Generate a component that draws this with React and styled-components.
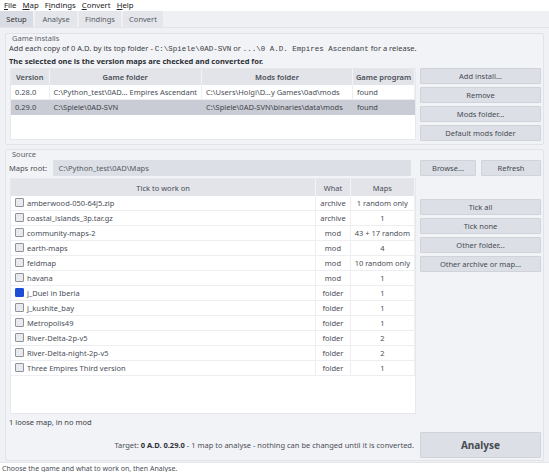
import React from "react";
import styled, { createGlobalStyle } from "styled-components";

const GlobalStyle = createGlobalStyle`
  html, body { margin: 0; padding: 0; }
  body {
    width: 549px;
    height: 472px;
    overflow: hidden;
    background: #f0f1f4;
    font-family: "Noto Sans", "Open Sans", sans-serif;
    font-size: 7.5px;
    color: #3a3d44;
  }
`;

/** Window frame */
const Window = styled.div`
  display: flex;
  flex-direction: column;
  width: 549px;
  height: 472px;
`;

const MenuBar = styled.div`
  display: flex;
  height: 11px;
  background: #ffffff;
  padding-left: 1px;
`;
const MenuItem = styled.div`
  padding: 0 3px;
  font-size: 7.8px;
  line-height: 11px;
  color: #222;
  span { text-decoration: underline; }
`;

const TabBar = styled.div`
  display: flex;
  gap: 2px;
  height: 16px;
  background: #eef0f3;
  border-bottom: 1px solid #e2e4e9;
`;
const Tab = styled.div`
  width: ${({ w }) => w}px;
  text-align: center;
  line-height: 16px;
  background: ${({ active }) => (active ? "#d9dce3" : "#e4e6eb")};
  color: ${({ active }) => (active ? "#333" : "#555a63")};
`;

const Content = styled.div`
  flex: 1;
  display: flex;
  flex-direction: column;
  gap: 4px;
  padding: 5px 5px 0;
`;

const Group = styled.div`
  display: flex;
  flex-direction: column;
  height: ${({ h }) => h}px;
  box-sizing: border-box;
  border: 1px solid #e1e3e8;
  border-radius: 2px;
  background: #f2f3f6;
  padding: 0 2px 0 4px;
`;
const GroupTitle = styled.div`
  line-height: 9px;
  margin-left: 2px;
  color: #5d626b;
`;
const Line = styled.div`
  line-height: ${({ lh }) => lh || 11}px;
  margin-left: -1px;
  font-weight: ${({ bold }) => (bold ? 700 : 400)};
  color: ${({ bold }) => (bold ? "#2c2f35" : "#3a3d44")};
  white-space: nowrap;
`;
const Mono = styled.span`
  font-family: "Liberation Mono", monospace;
  font-size: 7.5px;
`;

const Row = styled.div`
  display: flex;
  gap: ${({ gap }) => (gap === undefined ? 4 : gap)}px;
  margin-top: ${({ mt }) => mt || 0}px;
  margin-left: ${({ ml }) => ml || 0}px;
`;

/** Tables */
const TableBox = styled.div`
  width: 406px;
  height: ${({ h }) => h}px;
  background: #ffffff;
  border: 1px solid #e6e8ec;
  box-sizing: border-box;
  overflow: hidden;
`;
const Table = styled.table`
  border-collapse: collapse;
  table-layout: fixed;
  font-size: 7.5px;
  th {
    background: #e2e4e9;
    font-weight: ${({ boldHead }) => (boldHead ? 600 : 400)};
    color: #4a4e57;
    height: ${({ headH }) => headH}px;
    padding: 0;
    border-right: 1px solid #f3f4f6;
    text-align: center;
  }
  td {
    height: ${({ rowH }) => rowH}px;
    padding: 0 4px;
    border-bottom: 1px solid #eceef1;
    border-right: 1px solid #eceef1;
    white-space: nowrap;
    overflow: hidden;
    color: #4a4e57;
  }
  tr.sel td { background: #c9ccd4; color: #40434a; border-color: #c9ccd4; }
`;
const Cell = styled.td`
  text-align: ${({ align }) => align || "left"};
`;

const Check = styled.span`
  display: inline-block;
  width: 7px;
  height: 7px;
  margin-right: 3px;
  vertical-align: -1px;
  border: 1px solid ${({ on }) => (on ? "#1c4fd6" : "#8d929b")};
  background: ${({ on }) => (on ? "#1c4fd6" : "#e8eaee")};
  border-radius: 1px;
`;

/** Buttons */
const ButtonCol = styled.div`
  display: flex;
  flex-direction: column;
  gap: ${({ gap }) => gap}px;
  width: 121px;
  padding-top: ${({ pt }) => pt || 0}px;
`;
const Button = styled.div`
  height: ${({ h }) => h || 16}px;
  width: ${({ w }) => (w ? `${w}px` : "auto")};
  box-sizing: border-box;
  background: #dcdfe5;
  border: 1px solid #d0d3da;
  border-radius: 1px;
  text-align: center;
  line-height: ${({ h }) => (h || 16) - 2}px;
  color: #474b53;
  font-size: ${({ big }) => (big ? 10 : 7.5)}px;
  font-weight: ${({ big }) => (big ? 700 : 400)};
`;

const Label = styled.div`
  line-height: 16px;
  margin-left: -1px;
  color: #4a4e57;
  width: 41px;
`;
const PathInput = styled.div`
  width: 362px;
  height: 16px;
  box-sizing: border-box;
  background: #dcdfe5;
  line-height: 16px;
  padding-left: 5px;
  color: #555a63;
`;

const TargetRow = styled.div`
  display: flex;
  justify-content: flex-end;
  align-items: center;
  gap: 6px;
  margin-top: 4px;
`;
const TargetText = styled.div`
  color: #4a4e57;
  b { color: #2c2f35; }
`;

const StatusBar = styled.div`
  height: 10px;
  background: #ffffff;
  border-top: 1px solid #e4e6ea;
  margin-top: 1px;
  padding-left: 2px;
  font-size: 7px;
  line-height: 11px;
  color: #4a4e57;
  overflow: hidden;
`;

const installs = [
  { v: "0.28.0", g: "C:\\Python_test\\0AD... Empires Ascendant", m: "C:\\Users\\Holgi\\D...y Games\\0ad\\mods", p: "found" },
  { v: "0.29.0", g: "C:\\Spiele\\0AD-SVN", m: "C:\\Spiele\\0AD-SVN\\binaries\\data\\mods", p: "found", sel: true },
];

const maps = [
  ["amberwood-050-64j5.zip", "archive", "1 random only"],
  ["coastal_islands_3p.tar.gz", "archive", "1"],
  ["community-maps-2", "mod", "43 + 17 random"],
  ["earth-maps", "mod", "4"],
  ["feldmap", "mod", "10 random only"],
  ["havana", "mod", "1"],
  ["j_Duel in Iberia", "folder", "1", true],
  ["j_kushite_bay", "folder", "1"],
  ["Metropolis49", "folder", "1"],
  ["River-Delta-2p-v5", "folder", "2"],
  ["River-Delta-night-2p-v5", "folder", "2"],
  ["Three Empires Third version", "folder", "1"],
];

export default function App() {
  return (
    <>
      <GlobalStyle />
      <Window>
        <MenuBar>
          <MenuItem><span>F</span>ile</MenuItem>
          <MenuItem><span>M</span>ap</MenuItem>
          <MenuItem>F<span>i</span>ndings</MenuItem>
          <MenuItem><span>C</span>onvert</MenuItem>
          <MenuItem><span>H</span>elp</MenuItem>
        </MenuBar>
        <TabBar>
          <Tab w={33} active>Setup</Tab>
          <Tab w={42}>Analyse</Tab>
          <Tab w={42}>Findings</Tab>
          <Tab w={40}>Convert</Tab>
        </TabBar>
        <Content>
          <Group h={112}>
            <GroupTitle>Game installs</GroupTitle>
            <Line>
              Add each copy of 0 A.D. by its top folder - <Mono>C:\Spiele\0AD-SVN</Mono> or <Mono>...\0 A.D. Empires Ascendant</Mono> for a release.
            </Line>
            <Line bold lh={12}>The selected one is the version maps are checked and converted for.</Line>
            <Row mt={1}>
              <TableBox h={72}>
                <Table headH={16} rowH={14} boldHead>
                  <colgroup>
                    <col style={{ width: 38 }} />
                    <col style={{ width: 151 }} />
                    <col style={{ width: 151 }} />
                    <col style={{ width: 62 }} />
                  </colgroup>
                  <thead>
                    <tr><th>Version</th><th>Game folder</th><th>Mods folder</th><th>Game program</th></tr>
                  </thead>
                  <tbody>
                    {installs.map((r) => (
                      <tr key={r.v} className={r.sel ? "sel" : ""}>
                        <Cell>{r.v}</Cell>
                        <Cell>{r.g}</Cell>
                        <Cell>{r.m}</Cell>
                        <Cell>{r.p}</Cell>
                      </tr>
                    ))}
                  </tbody>
                </Table>
              </TableBox>
              <ButtonCol gap={3}>
                <Button>Add install...</Button>
                <Button>Remove</Button>
                <Button>Mods folder...</Button>
                <Button>Default mods folder</Button>
              </ButtonCol>
            </Row>
          </Group>

          <Group h={312}>
            <GroupTitle>Source</GroupTitle>
            <Row mt={1}>
              <Label>Maps root:</Label>
              <PathInput>C:\Python_test\0AD\Maps</PathInput>
              <Row ml={5} gap={5}>
                <Button w={56}>Browse...</Button>
                <Button w={60}>Refresh</Button>
              </Row>
            </Row>
            <Row mt={2}>
              <TableBox h={236}>
                <Table headH={17} rowH={14}>
                  <colgroup>
                    <col style={{ width: 309 }} />
                    <col style={{ width: 33 }} />
                    <col style={{ width: 58 }} />
                  </colgroup>
                  <thead>
                    <tr><th>Tick to work on</th><th>What</th><th>Maps</th></tr>
                  </thead>
                  <tbody>
                    {maps.map(([name, what, n, on]) => (
                      <tr key={name}>
                        <Cell><Check on={on} />{name}</Cell>
                        <Cell align="center">{what}</Cell>
                        <Cell align="center">{n}</Cell>
                      </tr>
                    ))}
                  </tbody>
                </Table>
              </TableBox>
              <ButtonCol gap={3} pt={21}>
                <Button>Tick all</Button>
                <Button>Tick none</Button>
                <Button>Other folder...</Button>
                <Button>Other archive or map...</Button>
              </ButtonCol>
            </Row>
            <Line style={{ marginTop: 3 }}>1 loose map, in no mod</Line>
            <TargetRow>
              <TargetText>
                Target: <b>0 A.D. 0.29.0</b> - 1 map to analyse - nothing can be changed until it is converted.
              </TargetText>
              <ButtonCol gap={0}>
                <Button h={26} big>Analyse</Button>
              </ButtonCol>
            </TargetRow>
          </Group>
        </Content>
        <StatusBar>Choose the game and what to work on, then Analyse.</StatusBar>
      </Window>
    </>
  );
}
